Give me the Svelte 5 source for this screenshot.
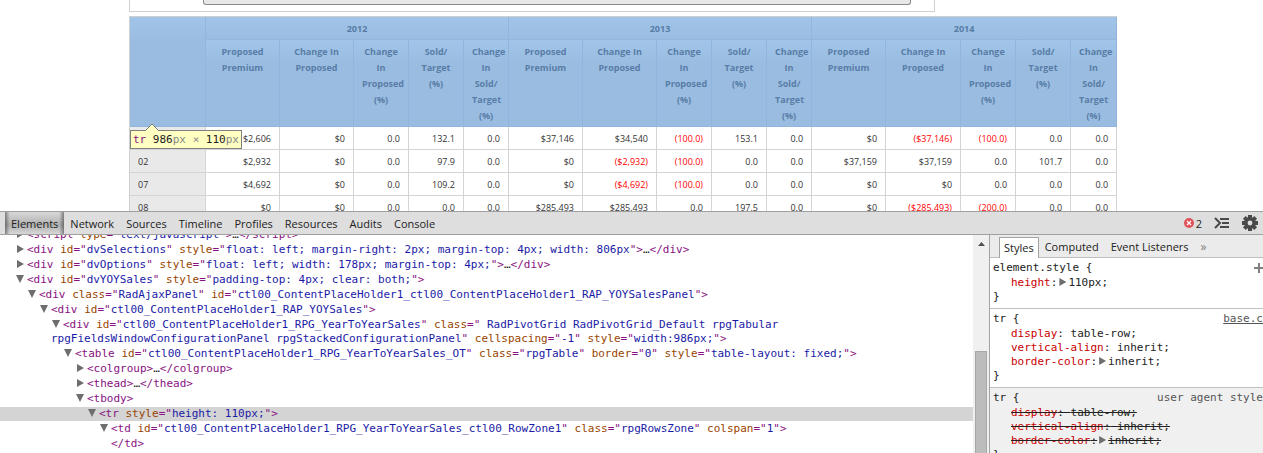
<script>
  const years = ['2012', '2013', '2014'];
  const measures = [
    ['Proposed', 'Premium'],
    ['Change In', 'Proposed'],
    ['Change', 'In', 'Proposed', '(%)'],
    ['Sold/', 'Target', '(%)'],
    ['Change', 'In', 'Sold/', 'Target', '(%)'],
  ];

  const colWidths = [76, 74, 74, 55, 55, 45, 74, 74, 55, 55, 45, 74, 75, 55, 55, 46];

  const rows = [
    ['', '$2,606', '$0', '0.0', '132.1', '0.0', '$37,146', '$34,540', '(100.0)', '153.1', '0.0', '$0', '($37,146)', '(100.0)', '0.0', '0.0'],
    ['02', '$2,932', '$0', '0.0', '97.9', '0.0', '$0', '($2,932)', '(100.0)', '0.0', '0.0', '$37,159', '$37,159', '0.0', '101.7', '0.0'],
    ['07', '$4,692', '$0', '0.0', '109.2', '0.0', '$0', '($4,692)', '(100.0)', '0.0', '0.0', '$0', '$0', '0.0', '0.0', '0.0'],
    ['08', '$0', '$0', '0.0', '0.0', '0.0', '$285,493', '$285,493', '0.0', '197.5', '0.0', '$0', '($285,493)', '(200.0)', '0.0', '0.0'],
  ];

  const panels = ['Elements', 'Network', 'Sources', 'Timeline', 'Profiles', 'Resources', 'Audits', 'Console'];

  const prefix = 'ctl00_ContentPlaceHolder1_';

  const nodes = [
    { depth: 0, state: 'closed', tag: 'script', attrs: [['type', 'text/javascript']], close: true },
    { depth: 0, state: 'closed', tag: 'div', attrs: [['id', 'dvSelections'], ['style', 'float: left; margin-right: 2px; margin-top: 4px; width: 806px']], close: true },
    { depth: 0, state: 'closed', tag: 'div', attrs: [['id', 'dvOptions'], ['style', 'float: left; width: 178px; margin-top: 4px;']], close: true },
    { depth: 0, state: 'open', tag: 'div', attrs: [['id', 'dvYOYSales'], ['style', 'padding-top: 4px; clear: both;']] },
    { depth: 1, state: 'open', tag: 'div', attrs: [['class', 'RadAjaxPanel'], ['id', prefix + 'ctl00_ContentPlaceHolder1_RAP_YOYSalesPanel']] },
    { depth: 2, state: 'open', tag: 'div', attrs: [['id', prefix + 'RAP_YOYSales']] },
    { depth: 3, state: 'open', tag: 'div', attrs: [['id', prefix + 'RPG_YearToYearSales'], ['class', ' RadPivotGrid RadPivotGrid_Default rpgTabular\nrpgFieldsWindowConfigurationPanel rpgStackedConfigurationPanel'], ['cellspacing', '-1'], ['style', 'width:986px;']] },
    { depth: 4, state: 'open', tag: 'table', attrs: [['id', prefix + 'RPG_YearToYearSales_OT'], ['class', 'rpgTable'], ['border', '0'], ['style', 'table-layout: fixed;']] },
    { depth: 5, state: 'closed', tag: 'colgroup', attrs: [], close: true },
    { depth: 5, state: 'closed', tag: 'thead', attrs: [], close: true },
    { depth: 5, state: 'open', tag: 'tbody', attrs: [] },
    { depth: 6, state: 'open', tag: 'tr', attrs: [['style', 'height: 110px;']], selected: true },
    { depth: 7, state: 'open', tag: 'td', attrs: [['id', prefix + 'RPG_YearToYearSales_ctl00_RowZone1'], ['class', 'rpgRowsZone'], ['colspan', '1']] },
    { depth: 7, state: 'leaf', tag: '/td', attrs: [] },
  ];

  const rules = [
    { selector: 'element.style', props: [['height', '110px', true]], add: true },
    { selector: 'tr', link: 'base.c', props: [['display', 'table-row'], ['vertical-align', 'inherit'], ['border-color', 'inherit', true]] },
    { selector: 'tr', origin: 'user agent style', props: [['display', 'table-row'], ['vertical-align', 'inherit'], ['border-color', 'inherit', true]] },
  ];
</script>

<div class="window">
  <main class="page">
    <div class="content">
      <div class="selections">
        <div class="combo"></div>
      </div>

      <div class="grid-wrap">
        <table class="pivot">
          <colgroup>
            {#each colWidths as w}
              <col style="width: {w}px" />
            {/each}
          </colgroup>
          <thead>
            <tr class="years">
              <th rowspan="2" class="corner"></th>
              {#each years as year}
                <th colspan="5" scope="colgroup">{year}</th>
              {/each}
            </tr>
            <tr class="measures">
              {#each years as year}
                {#each measures as lines}
                  <th scope="col">
                    {#each lines as line}<span>{line}</span>{/each}
                  </th>
                {/each}
              {/each}
            </tr>
          </thead>
          <tbody>
            {#each rows as [label, ...cells]}
              <tr>
                <th scope="row">{label}</th>
                {#each cells as cell}
                  <td class:negative={cell.startsWith('(')}>{cell}</td>
                {/each}
              </tr>
            {/each}
          </tbody>
        </table>

        <div class="tooltip">
          <svg class="pointer" width="14" height="8" viewBox="0 0 14 8">
            <path d="M0 8 L7 1 L14 8" fill="#ffffc2" stroke="#808080" />
          </svg>
          <span class="tag">tr</span> 986<span class="unit">px</span> <span class="unit">×</span> 110<span class="unit">px</span>
        </div>
      </div>
    </div>
  </main>

  <section class="devtools">
    <header class="toolbar">
      <nav class="panels">
        {#each panels as panel, i}
          <button class:active={i === 0}>{panel}</button>
        {/each}
      </nav>
      <div class="status">
        <button class="errors" aria-label="2 errors">
          <svg width="10" height="10" viewBox="0 0 10 10">
            <circle cx="5" cy="5" r="5" fill="#e0525a" />
            <path d="M3 3 L7 7 M7 3 L3 7" stroke="#fff" stroke-width="1.3" />
          </svg>
          2
        </button>
        <button aria-label="Show drawer">
          <svg width="16" height="12" viewBox="0 0 16 12">
            <path d="M1 1 L6 6 L1 11" fill="none" stroke="#4a4a4a" stroke-width="2" />
            <path d="M6 2 H15 M8 6 H15 M6 10 H15" stroke="#4a4a4a" stroke-width="2" />
          </svg>
        </button>
        <button aria-label="Settings">
          <svg width="16" height="16" viewBox="-8 -8 16 16">
            <g fill="#4a4a4a">
              {#each [0, 45, 90, 135] as angle}
                <rect x="-2" y="-8" width="4" height="16" transform="rotate({angle})" />
              {/each}
              <circle r="6" />
            </g>
            <circle r="2.4" fill="#dedede" />
          </svg>
        </button>
      </div>
    </header>

    <div class="body">
      <div class="tree">
        {#each nodes as node}
          <div class="node" class:selected={node.selected} style="padding-left: {15 + node.depth * 12}px">
            <i class="arrow {node.state}"></i><span class="punct">&lt;{node.tag}</span>{#each node.attrs as [name, value]}{' '}<span class="name">{name}</span><span class="punct">="</span><span class="value">{value}</span><span class="punct">"</span>{/each}<span class="punct">&gt;</span>{#if node.close}…<span class="punct">&lt;/{node.tag}&gt;</span>{/if}
          </div>
        {/each}
      </div>

      <div class="scrollbar">
        <svg width="7" height="4" viewBox="0 0 7 4"><path d="M0 4 L3.5 0 L7 4 Z" fill="#505050" /></svg>
        <div class="thumb"></div>
      </div>

      <aside class="sidebar">
        <nav class="subtabs">
          <button class="active">Styles</button>
          <button>Computed</button>
          <button>Event Listeners</button>
          <button class="more">»</button>
        </nav>
        {#each rules as rule}
          <div class="rule" class:inherited={rule.origin}>
            <div class="head">
              <span>{rule.selector} {'{'}</span>
              {#if rule.add}
                <button class="add" aria-label="New style rule">
                  <svg width="9" height="10" viewBox="0 0 9 10"><path d="M0 5 H9 M5 0 V10" stroke="#808080" stroke-width="2" /></svg>
                </button>
              {:else if rule.link}
                <a href="#base">{rule.link}</a>
              {:else}
                <span class="origin">{rule.origin}</span>
              {/if}
            </div>
            {#each rule.props as [name, value, expandable]}
              <div class="prop"><span class="key">{name}</span>:{#if expandable}<i class="arrow closed"></i>{:else}{' '}{/if}{value};</div>
            {/each}
            <div class="end">{'}'}</div>
          </div>
        {/each}
      </aside>
    </div>
  </section>
</div>

<style>
  :global(body) {
    margin: 0;
    background: #fff;
  }

  button {
    border: 0;
    padding: 0;
    background: none;
    font: inherit;
    color: inherit;
  }

  svg {
    display: block;
  }

  .window {
    display: flex;
    flex-direction: column;
    height: 100vh;
    overflow: hidden;
    font-family: "Open Sans", "Noto Sans", sans-serif;
  }

  .page {
    flex: 1;
    min-height: 0;
    overflow: hidden;
  }

  .content {
    max-width: 1005px;
    margin: 0 auto;
  }

  .selections {
    box-sizing: border-box;
    max-width: 806px;
    padding: 0 23px 6px 73px;
    border: 1px solid #d0d0d0;
    border-top: 0;
  }

  .combo {
    height: 4px;
    border: 1px solid #8a8a8a;
    border-top: 0;
    border-radius: 0 0 3px 3px;
    background: #e8e8e8;
  }

  .grid-wrap {
    position: relative;
    max-width: 988px;
    margin-top: 4px;
  }

  .pivot {
    width: 100%;
    table-layout: fixed;
    border-spacing: 0;
    border: 1px solid #d0d0d0;
    border-right: 0;
    font-size: 9px;
    line-height: 16px;
    color: #333;
  }

  .pivot th,
  .pivot td {
    box-sizing: border-box;
    height: 23px;
    padding: 2px 8px 0;
    border-right: 1px solid #d4d4d4;
    border-bottom: 1px solid #d4d4d4;
    text-align: right;
    white-space: nowrap;
  }

  .pivot td.negative {
    color: #f00;
  }

  .pivot tbody th {
    background: #e9e9e9;
    text-align: left;
    font-weight: 400;
  }

  .pivot thead th {
    border-color: #91b5dc;
    background: linear-gradient(#a1c4e9, #9abce1 24px);
    color: #587da6;
    text-align: center;
    font-weight: 700;
  }

  .pivot .measures th {
    height: 87px;
    padding-top: 4px;
    vertical-align: top;
  }

  .measures span {
    display: block;
  }

  .tooltip {
    position: absolute;
    top: 114px;
    left: 1px;
    padding: 0 2px;
    border: 1px solid #808080;
    background: #ffffc2;
    font: 11px/17px "DejaVu Sans Mono", monospace;
    color: #222;
    white-space: nowrap;
  }

  .pointer {
    position: absolute;
    top: -8px;
    left: 14px;
  }

  .tooltip .tag {
    color: #881280;
  }

  .tooltip .unit {
    color: #888;
  }

  .devtools {
    display: flex;
    flex: 0 0 242px;
    flex-direction: column;
    min-height: 0;
    font-size: 11px;
    color: #222;
  }

  .toolbar {
    display: flex;
    justify-content: space-between;
    height: 22px;
    border-top: 1px solid #a0a0a0;
    border-bottom: 1px solid #a0a0a0;
    background: #dedede;
  }

  .panels {
    display: flex;
    padding-left: 5px;
  }

  .panels button {
    padding: 0 6px;
  }

  .panels .active {
    background: linear-gradient(to right, rgb(0 0 0 / 40%), transparent 8%, transparent 92%, rgb(0 0 0 / 40%)), linear-gradient(#d8d8d8, #b0b0b0 60%, #d8d8d8);
  }

  .status {
    display: flex;
    align-items: center;
    gap: 12px;
    padding-right: 5px;
  }

  .errors {
    display: flex;
    align-items: center;
    gap: 2px;
  }

  .body {
    display: flex;
    flex: 1;
    min-height: 0;
  }

  .tree,
  .sidebar {
    font-family: "DejaVu Sans Mono", monospace;
    font-size: 11px;
    line-height: 14px;
  }

  .tree {
    display: flex;
    flex: 1;
    flex-direction: column;
    justify-content: flex-end;
    gap: 1px;
    min-width: 0;
    padding-bottom: 2px;
    overflow: hidden;
  }

  .node {
    flex: none;
    white-space: pre-line;
  }

  .selected {
    background: #d4d4d4;
  }

  .arrow {
    display: inline-block;
    width: 8px;
    height: 8px;
    margin: 0 3px 0 1px;
    background: #6e6e6e;
  }

  .closed {
    clip-path: polygon(1px 0, 8px 4px, 1px 8px);
  }

  .open {
    clip-path: polygon(0 0, 8px 0, 4px 8px);
  }

  .leaf {
    background: none;
  }

  .punct {
    color: #881280;
  }

  .name {
    color: #994500;
  }

  .value {
    color: #1a1aa6;
  }

  .scrollbar {
    display: flex;
    flex: 0 0 16px;
    flex-direction: column;
    align-items: center;
    justify-content: space-between;
    padding-top: 7px;
    background: #f0f0f0;
  }

  .thumb {
    box-sizing: border-box;
    width: 12px;
    height: 102px;
    border: 1px solid #a8a8a8;
    border-bottom: 0;
    background: #bcbcbc;
  }

  .sidebar {
    flex: 0 0 273px;
    border-left: 1px solid #a3a3a3;
    overflow: hidden;
  }

  .subtabs {
    display: flex;
    align-items: flex-end;
    height: 22px;
    padding-left: 9px;
    border-bottom: 1px solid #bfbfbf;
    background: #ebebeb;
    font: 11px/20px "Open Sans", "Noto Sans", sans-serif;
  }

  .subtabs button {
    padding: 0 6px;
  }

  .subtabs .active {
    margin-bottom: -1px;
    padding: 0 4px;
    border: 1px solid #a3a3a3;
    border-bottom: 0;
    background: #fff;
  }

  .subtabs .more {
    color: #808080;
    font-size: 12px;
  }

  .rule {
    padding: 2px 0 4px 3px;
    border-bottom: 1px solid #bfbfbf;
  }

  .head {
    display: flex;
    align-items: center;
    justify-content: space-between;
    height: 15px;
    margin-bottom: 1px;
    white-space: nowrap;
  }

  .head a {
    color: #555;
  }

  .origin {
    color: #555;
  }

  .prop {
    padding-left: 18px;
  }

  .prop .arrow {
    margin: 0 2px 0 1px;
  }

  .key {
    color: #c80000;
  }

  .inherited {
    background: #f0f0f0;
  }

  .inherited .prop {
    text-decoration: line-through;
  }
</style>
